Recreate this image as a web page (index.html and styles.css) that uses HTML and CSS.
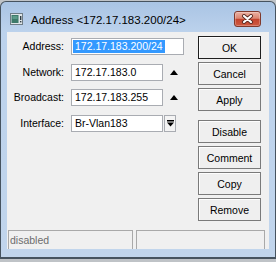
FILE: index.html
```html
<!DOCTYPE html>
<html>
<head>
<meta charset="utf-8">
<link rel="stylesheet" href="styles.css">
</head>
<body>
<div class="window">
  <div class="titlebar">
    <svg class="app-icon" width="13" height="12" viewBox="0 0 13 12">
      <rect x="0.5" y="0.5" width="12" height="11" fill="#dfe5e8" stroke="#6f7d86"/>
      <rect x="1.5" y="2" width="7" height="8" fill="#3d7a6a"/>
      <rect x="2.5" y="3" width="5" height="3" fill="#5c9a88"/>
      <rect x="10" y="3" width="1.4" height="4" fill="#2f3d44"/>
      <rect x="10" y="8" width="1.4" height="1.4" fill="#2f3d44"/>
    </svg>
    <span class="title">Address &lt;172.17.183.200/24&gt;</span>
    <div class="close">
      <svg width="13" height="10" viewBox="0 0 13 10">
        <path d="M3 2 L10 8 M10 2 L3 8" stroke="#5a2a22" stroke-width="4" stroke-linecap="round"/>
        <path d="M3 2 L10 8 M10 2 L3 8" stroke="#ffffff" stroke-width="2.2" stroke-linecap="round"/>
      </svg>
    </div>
  </div>
  <div class="client">
    <div class="main">
      <div class="form">
        <div class="row">
          <span class="label">Address:</span>
          <div class="field wide"><span class="sel">172.17.183.200/24</span></div>
        </div>
        <div class="row">
          <span class="label">Network:</span>
          <div class="field">172.17.183.0</div>
          <span class="up"></span>
        </div>
        <div class="row">
          <span class="label">Broadcast:</span>
          <div class="field">172.17.183.255</div>
          <span class="up"></span>
        </div>
        <div class="row">
          <span class="label">Interface:</span>
          <div class="field">Br-Vlan183</div>
          <div class="dd">
            <svg width="7" height="7" viewBox="0 0 7 7">
              <rect x="0" y="0" width="7" height="1.5" fill="#000"/>
              <path d="M0 2.5 H7 L3.5 6.5 Z" fill="#000"/>
            </svg>
          </div>
        </div>
      </div>
      <div class="buttons">
        <div class="btn default">OK</div>
        <div class="btn">Cancel</div>
        <div class="btn">Apply</div>
        <div class="btn spaced">Disable</div>
        <div class="btn">Comment</div>
        <div class="btn">Copy</div>
        <div class="btn">Remove</div>
      </div>
    </div>
    <div class="statusbar">
      <div class="panel left">disabled</div>
      <div class="panel right"></div>
    </div>
  </div>
</div>
</body>
</html>
```

FILE: styles.css
```css
html, body {
  margin: 0;
  padding: 0;
}
body {
  width: 276px;
  height: 262px;
  overflow: hidden;
  background: #bfc3c7;
  font-family: "Liberation Sans", Arial, sans-serif;
  font-size: 10.5px;
  color: #000;
}
.window {
  margin-top: 1px;
  height: 258px;
  box-sizing: border-box;
  border: 1px solid #46535f;
  border-bottom-width: 2px;
  border-radius: 6px 6px 0 0;
  background: linear-gradient(#a9c4e4 0px, #bcd2ec 30px, #c1d5ec 100%);
  padding: 0 6px 8px 6px;
  display: flex;
  flex-direction: column;
}
.titlebar {
  height: 30px;
  margin: 0 -6px;
  display: flex;
  align-items: flex-start;
  flex: none;
}
.app-icon {
  margin: 11px 0 0 9px;
  flex: none;
}
.title {
  margin: 11px 0 0 8px;
  font-size: 11.5px;
  line-height: 14px;
  color: #000;
  white-space: nowrap;
}
.close {
  margin: 9px 14px 0 auto;
  width: 27px;
  height: 16px;
  box-sizing: border-box;
  border: 1px solid #80392c;
  border-radius: 3px;
  background: linear-gradient(#ebb1a3 0%, #dc8671 45%, #c4442d 52%, #cf5b42 100%);
  display: flex;
  align-items: center;
  justify-content: center;
  box-shadow: inset 0 0 0 1px rgba(255,255,255,0.25);
}
.client {
  flex: 1;
  background: #f0f0f0;
  display: flex;
  flex-direction: column;
}
.main {
  display: flex;
  padding-top: 4px;
}
.form {
  flex: 1;
  margin-top: 2px;
}
.row {
  display: flex;
  align-items: flex-start;
  height: 25.5px;
}
.label {
  width: 57px;
  text-align: right;
  line-height: 17px;
  margin-right: 7px;
  white-space: nowrap;
}
.field {
  width: 92px;
  height: 17px;
  box-sizing: border-box;
  border: 1px solid #a9acb2;
  background: #fff;
  padding-left: 3px;
  line-height: 15px;
  white-space: nowrap;
  overflow: hidden;
}
.field.wide {
  width: 113px;
  padding-left: 1px;
}
.sel {
  display: inline-block;
  margin-top: 1px;
  height: 13px;
  line-height: 13px;
  padding: 0 2px;
  background: #3399ff;
  color: #fff;
  vertical-align: top;
}
.up {
  margin: 6px 0 0 7px;
  width: 0;
  height: 0;
  border-left: 4px solid transparent;
  border-right: 4px solid transparent;
  border-bottom: 5px solid #000;
}
.dd {
  margin-left: 1px;
  width: 12px;
  height: 17px;
  box-sizing: border-box;
  border: 1px solid #a9acb2;
  background: #f4f4f4;
  display: flex;
  align-items: center;
  justify-content: center;
}
.buttons {
  width: 63px;
  margin-right: 8px;
  display: flex;
  flex-direction: column;
  gap: 3px;
}
.btn {
  height: 23px;
  box-sizing: border-box;
  border: 1px solid #7a7a7a;
  background: #efefef;
  display: flex;
  align-items: center;
  justify-content: center;
  box-shadow: inset 1px 1px 0 #fdfdfd;
}
.btn.default {
  border-color: #1e1e1e;
}
.btn.spaced {
  margin-top: 6px;
}
.statusbar {
  margin-top: auto;
  height: 19px;
  display: flex;
  gap: 3px;
  padding: 0 4px 0 1px;
}
.panel {
  box-sizing: border-box;
  border: 1px solid #a9a9a9;
  border-bottom: none;
  padding-left: 1px;
  line-height: 18px;
  color: #6d6d6d;
}
.panel.left {
  width: 125px;
}
.panel.right {
  flex: 1;
}
```
